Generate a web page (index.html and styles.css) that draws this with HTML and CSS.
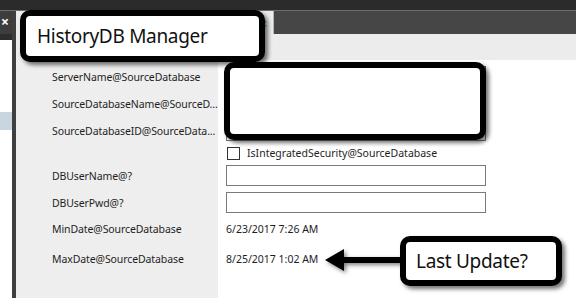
FILE: index.html
```html
<!DOCTYPE html>
<html lang="en">
<head>
  <meta charset="UTF-8">
  <title>HistoryDB Manager</title>
  <link rel="stylesheet" href="styles.css">
</head>
<body>

<div class="window">
  <div class="titlebar"></div>

  <div class="workspace">
    <div class="sidebar">
      <div class="side-tab"><span>×</span></div>
      <div class="side-head"></div>
      <div class="side-list">
        <div class="side-item"></div>
        <div class="side-item"></div>
        <div class="side-item"></div>
        <div class="side-item selected"></div>
      </div>
    </div>

    <div class="splitter"></div>

    <div class="main">
      <div class="tabs">
        <div class="tab active"><span class="tab-close">×</span></div>
        <div class="tab-fill"></div>
      </div>

      <div class="doc-head"></div>

      <div class="form">
        <div class="label">ServerName@SourceDatabase</div>
        <div class="value"><div class="input focused"></div></div>

        <div class="label" title="SourceDatabaseName@SourceDatabase">SourceDatabaseName@SourceD...</div>
        <div class="value"><div class="input"></div></div>

        <div class="label" title="SourceDatabaseID@SourceDatabase">SourceDatabaseID@SourceData...</div>
        <div class="value"><div class="input"></div></div>

        <div class="label"></div>
        <div class="value check-row">
          <span class="checkbox"></span>
          <span>IsIntegratedSecurity@SourceDatabase</span>
        </div>

        <div class="label">DBUserName@?</div>
        <div class="value"><div class="input"></div></div>

        <div class="label">DBUserPwd@?</div>
        <div class="value"><div class="input"></div></div>

        <div class="label">MinDate@SourceDatabase</div>
        <div class="value">6/23/2017 7:26 AM</div>

        <div class="label">MaxDate@SourceDatabase</div>
        <div class="value">8/25/2017 1:02 AM</div>

        <div class="label"></div>
        <div class="value"></div>
      </div>
    </div>
  </div>

  <!-- annotations drawn over the screenshot -->
  <div class="callout title-callout">HistoryDB Manager</div>
  <div class="callout redact"></div>
  <svg class="arrow" width="80" height="30" viewBox="0 0 80 30">
    <path d="M2 15 L21 4 L21 12 L80 12 L80 18 L21 18 L21 26 Z" fill="#000"/>
  </svg>
  <div class="callout update-callout">Last Update?</div>
</div>

</body>
</html>
```

FILE: styles.css
```css
* { margin: 0; padding: 0; box-sizing: border-box; }
body {
  font-family: 'Noto Sans', sans-serif;
  font-size: 10.5px;
  color: #1e1e1e;
  background: #2b2b2b;
}
.window {
  position: relative;
  width: 576px;
  height: 298px;
  overflow: hidden;
  display: flex;
  flex-direction: column;
}
.titlebar {
  height: 11px;
  background: #2b2b2b;
  border-bottom: 1px solid #6e6e6e;
}
.workspace {
  flex: 1;
  display: flex;
}
.sidebar {
  width: 12px;
  display: flex;
  flex-direction: column;
  background: #fff;
}
.side-tab {
  height: 23px;
  background: #3d3d3d;
  color: #fff;
  font-size: 14px;
  font-weight: bold;
  line-height: 22px;
  padding-left: 1px;
}
.side-head {
  height: 6px;
  background: #2d2d2d;
}
.side-item {
  height: 18px;
  margin-bottom: 4px;
}
.side-item:first-child { margin-top: 6px; }
.side-item.selected { background: #c9d5e0; }
.splitter {
  width: 4px;
  background: #3f3f3f;
}
.main {
  flex: 1;
  display: flex;
  flex-direction: column;
  background: #fff;
}
.tabs {
  height: 23px;
  display: flex;
}
.tab.active {
  width: 258px;
  background: #ececec;
  position: relative;
  border-right: 1px solid #b5b5b5;
}
.tab-close {
  position: absolute;
  right: 6px;
  top: 2px;
  color: #1c6fa8;
  font-size: 15px;
  font-weight: bold;
}
.tab-fill {
  flex: 1;
  background: #464646;
}
.doc-head {
  height: 26px;
  background: #ececec;
}
.form {
  flex: 1;
  display: grid;
  grid-template-columns: 202px 1fr;
  grid-template-rows: 3px repeat(3, 27px) 18px repeat(2, 27px) 26px 34px 1fr;
}
.form::before {
  content: "";
  grid-column: 1 / 3;
  background: linear-gradient(to right, #eeeeee 202px, #fff 202px);
}
.label {
  background: #eeeeee;
  padding-left: 36px;
  display: flex;
  align-items: center;
  white-space: nowrap;
  letter-spacing: -0.1px;
}
.value {
  padding-left: 8px;
  display: flex;
  align-items: center;
  white-space: nowrap;
}
.input {
  width: 260px;
  height: 21px;
  border: 1px solid #7a7a7a;
  background: #fff;
}
.input.focused { border-color: #2a6aa0; }
.check-row { gap: 7px; }
.checkbox {
  width: 13px;
  height: 13px;
  border: 1px solid #333;
  background: #fff;
  margin-left: 1px;
}
.callout {
  position: absolute;
  background: #fff;
  border: 6px solid #000;
  border-radius: 10px;
  box-shadow: 3px 3px 4px rgba(0, 0, 0, 0.55);
  font-size: 19px;
  letter-spacing: -0.3px;
  color: #111;
  display: flex;
  align-items: center;
}
.title-callout {
  left: 20px;
  top: 10px;
  width: 245px;
  height: 52px;
  padding-left: 11px;
}
.redact {
  left: 224px;
  top: 62px;
  width: 262px;
  height: 78px;
}
.update-callout {
  left: 400px;
  top: 236px;
  width: 162px;
  height: 50px;
  padding-left: 10px;
}
.arrow {
  position: absolute;
  left: 323px;
  top: 245px;
  filter: drop-shadow(2px 2px 2px rgba(0, 0, 0, 0.5));
}
```
